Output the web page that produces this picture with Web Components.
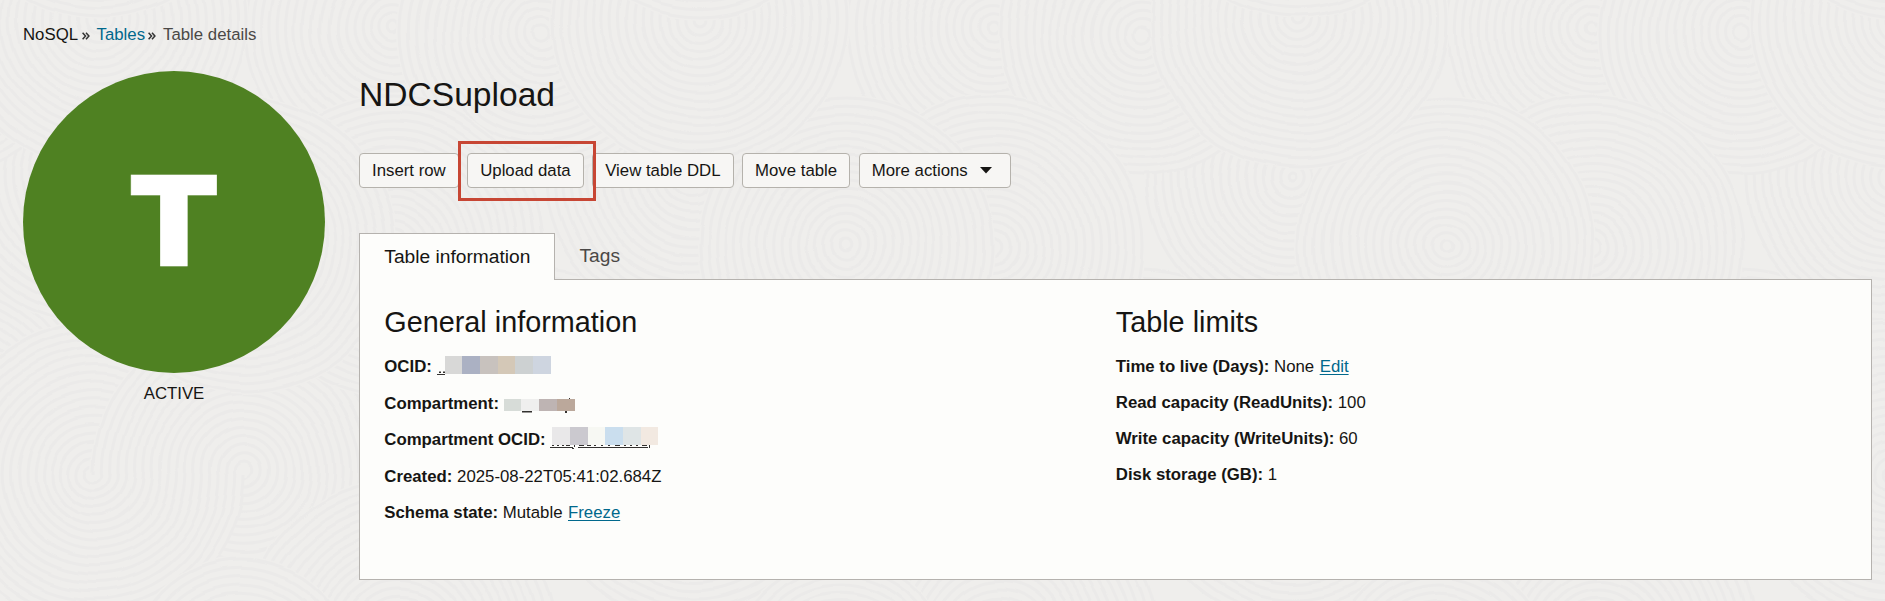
<!DOCTYPE html>
<html lang="en">
<head>
<meta charset="utf-8">
<title>Table details</title>
<style>
html,body{margin:0;height:100%;overflow:hidden}
body{background:#efeeec;color:#161513;font:16.8px/24px "Liberation Sans",Arial,sans-serif}
</style>
</head>
<body>
<table-page></table-page>
<script>
const define = (name, html, setup) => customElements.define(name, class extends HTMLElement {
  constructor() {
    super();
    const t = document.createElement('template');
    t.innerHTML = html;
    this.attachShadow({mode: 'open'}).append(t.content.cloneNode(true));
  }
  connectedCallback() { if (setup) setup(this, this.shadowRoot); }
});

/* Raked-sand texture: overlapping sets of concentric rings, repeated every 600px. */
define('sand-texture', `<style>:host{position:absolute;inset:0;z-index:-1;overflow:hidden}svg{display:block}</style><div></div>`, (el, root) => {
  const stamps = [[393,28,147],[94,474,150],[244,470,150],[94,474,150,'bottom'],[400,640,158],[541,33,141],[541,420,150],[393,247,150],[246,245,147],[691,177,145],[99,20,147],[541,33,141,'right'],[99,-130,147],[240,670,110]];
  let s = '';
  for (const [cx, cy, r, half] of stamps) {
    const arc = q => half === 'right' ? `M${cx} ${cy - q}A${q} ${q} 0 0 1 ${cx} ${cy + q}` : `M${cx + q} ${cy}A${q} ${q} 0 0 1 ${cx - q} ${cy}`;
    s += half ? `<path d="${arc(r)}Z" fill="#efeeec" stroke="none"/>` : `<circle cx="${cx}" cy="${cy}" r="${r + 3}" fill="#efeeec" stroke="none"/>`;
    for (let q = r; q > 3; q -= 8.3) {
      s += half ? `<path d="${arc(q)}"/>` : `<circle cx="${cx}" cy="${cy}" r="${q}"/>`;
    }
  }
  let uses = '';
  for (const x of [-1200, -600, 0, 600, 1200, 1800]) uses += `<use href="#t" x="${x}"/>`;
  root.querySelector('div').innerHTML = `<svg width="1885" height="601" fill="none" stroke="#ebeae9" stroke-width="3"><defs><filter id="w" filterUnits="userSpaceOnUse" x="-20" y="-20" width="1925" height="641" color-interpolation-filters="sRGB"><feTurbulence type="fractalNoise" baseFrequency=".012" numOctaves="2" seed="4" result="n"/><feDisplacementMap in="SourceGraphic" in2="n" scale="10" xChannelSelector="R" yChannelSelector="G"/></filter><g id="t">${s}</g></defs><g filter="url(#w)">${uses}</g></svg>`;
});

define('bread-crumb', `<style>
:host{display:flex;height:24px;padding:22.5px 0 0 23px;line-height:24px;white-space:pre}
.here{color:#4a4846}.sep{margin:0 7px 0 3.5px;width:8px;display:flex;align-items:center}svg{display:block;margin-top:2px}
::slotted(a){color:#00688c;text-decoration:none}
.last{margin:0 7px 0 3px}
</style><slot name="root"></slot><span class="sep"><svg width="8" height="8" fill="none" stroke="#333" stroke-width="1.5"><path d="M.6.8 3.5 4 .6 7.2M4 .8 6.9 4 4 7.2"/></svg></span><slot name="parent"></slot><span class="sep last"><svg width="8" height="8" fill="none" stroke="#333" stroke-width="1.5"><path d="M.6.8 3.5 4 .6 7.2M4 .8 6.9 4 4 7.2"/></svg></span><span class="here"><slot></slot></span>`);

define('status-badge', `<style>
:host{display:block;width:302px;text-align:center}
.disc{width:302px;height:302px;border-radius:50%;background:#4f8122;display:flex;align-items:center;justify-content:center;color:#fff;font:900 125px/125px Inter,sans-serif}
::slotted([slot=letter]){display:block;transform:translateY(-2px) scaleX(1.08);-webkit-text-stroke:.6px #fff}
.state{margin-top:8.5px;line-height:24px}
</style><div class="disc"><slot name="letter"></slot></div><div class="state"><slot></slot></div>`);

define('action-button', `<style>
:host{display:flex;align-items:center;box-sizing:border-box;height:35px;padding:0 12px;border:1px solid #b5b2ac;border-radius:4px;background:#f7f6f4;line-height:33px;white-space:nowrap;position:relative}
svg{display:none;margin:0 6px 0 12.3px}
:host([menu]) svg{display:block}
.mark{display:none}
:host([marked]) .mark{display:block;position:absolute;box-sizing:border-box;left:-10px;top:-13px;width:138px;height:60px;border:3px solid #c74634;z-index:2}
:host([marked]){z-index:2}
</style><slot></slot><svg width="12" height="7"><path d="M0 0H12L6 6.5Z" fill="#161513"/></svg><span class="mark"></span>`);

define('tab-item', `<style>
:host{display:block;box-sizing:border-box;height:46px;padding:0 24.5px;font-size:19.2px;line-height:45px;color:#4a4846}
:host([active]){height:47px;border:1px solid #b5b2ae;border-bottom:0;background:#fdfdfb;color:#161513;margin-bottom:-1px;padding:0 25px 0 24.3px;width:196px;position:relative;line-height:46px;white-space:nowrap}
</style><slot></slot>`);

define('info-group', `<style>
:host{display:block}
h2{margin:0 0 9px;font-weight:400;font-size:28.8px;line-height:36px}
</style><h2></h2><slot></slot>`, (el, root) => { root.querySelector('h2').textContent = el.getAttribute('heading'); });

define('info-row', `<style>
:host{display:flex;height:var(--row,36px);line-height:36px;white-space:nowrap}
b{margin-right:4.7px}
::slotted(a){color:#00688c;text-decoration:underline;text-decoration-thickness:1px;text-underline-offset:2px;margin-left:5.5px}
</style><b></b><slot></slot>`, (el, root) => { root.querySelector('b').textContent = el.getAttribute('label') + ':'; });

/* Redacted value: a strip of coloured cells over what is left of the text. */
define('redacted-value', `<style>
:host{display:block;position:relative;height:36px}
.cells{display:flex;position:absolute;overflow:hidden}
i{flex:1}
.rest{position:absolute;left:0;top:0}
</style><svg class="rest" width="120" height="36"></svg><div class="cells"></div>`, (el, root) => {
  const c = root.querySelector('.cells');
  const [x, y, w, h] = el.getAttribute('box').split(' ');
  c.style.cssText = `left:${x}px;top:${y}px;width:${w}px;height:${h}px`;
  c.innerHTML = el.getAttribute('colors').split(' ').map(v => `<i style="background:#${v}"></i>`).join('');
  root.querySelector('.rest').innerHTML = `<path d="${el.getAttribute('marks')}" fill="#33312f"/>`;
});

define('table-page', `<style>
:host{display:block;position:relative;z-index:0;width:1885px;height:601px}
.main{display:flex;padding:24.5px 14px 0 23px;gap:34px}
.right{flex:1}
h1{margin:1.5px 0 0;font-weight:400;font-size:33.6px;line-height:44px}
.actions{display:flex;gap:8.5px;margin-top:36.5px}
.tabs{display:flex;margin-top:45px}
.panel{display:grid;grid-template-columns:731.5px 1fr;box-sizing:border-box;height:301px;width:1513px;border:1px solid #b5b2ae;background:#fdfdfb;padding:24px 24px 0 24.3px}
.l{--row:36.5px}
</style>
<sand-texture></sand-texture>
<bread-crumb><span slot="root">NoSQL</span><a slot="parent">Tables</a>Table details</bread-crumb>
<div class="main">
<status-badge><span slot="letter">T</span>ACTIVE</status-badge>
<div class="right">
<h1>NDCSupload</h1>
<div class="actions"><action-button>Insert row</action-button><action-button marked>Upload data</action-button><action-button>View table DDL</action-button><action-button>Move table</action-button><action-button menu>More actions</action-button></div>
<div class="tabs"><tab-item active>Table information</tab-item><tab-item>Tags</tab-item></div>
<div class="panel">
<info-group class="l" heading="General information">
<info-row label="OCID"><redacted-value box="8 7 106 18" colors="d8d8d7 abb1c3 c8c2be d4c8b7 cdd1d2 ced5e0" marks="M0 25h8v1H0zM2 22.500h2v1.500h-2zM6 22.500h2v1.500h-2z"></redacted-value></info-row>
<info-row label="Compartment"><redacted-value box="0 13 71 12" colors="d7dcd8 efefee beb4b3 bba89b" marks="M18 25h10v1.500H18zM61 24h2v3h-2zM65 12h1v2h-1z"></redacted-value></info-row>
<info-row label="Compartment OCID"><redacted-value box="2 5 106 18" colors="e9e8e9 cbc9cf f7f8f3 cadeee dfe5e6 f2e9e1" marks="M0 25h23v1H0zM28 25h70v1H28zM2 22h2v2h-2zM7 22h2v2h-2zM12 22h2v2h-2zM16 22h4v2h-4zM24 22h1v3h-1v2h-2v-1h2zM29 22h5v2h-5zM37 22h4v2h-4zM44 22h2v2h-2zM51 22h2v2h-2zM58 22h2v2h-2zM65 22h5v2h-5zM74 22h2v2h-2zM80 22h2v2h-2zM86 22h2v2h-2zM92 22h5v2h-5zM99 22h1v4h-1z"></redacted-value></info-row>
<info-row label="Created">2025-08-22T05:41:02.684Z</info-row>
<info-row label="Schema state">Mutable<a>Freeze</a></info-row>
</info-group>
<info-group heading="Table limits">
<info-row label="Time to live (Days)">None<a>Edit</a></info-row>
<info-row label="Read capacity (ReadUnits)">100</info-row>
<info-row label="Write capacity (WriteUnits)">60</info-row>
<info-row label="Disk storage (GB)">1</info-row>
</info-group>
</div></div></div>`);
</script>
</body>
</html>
